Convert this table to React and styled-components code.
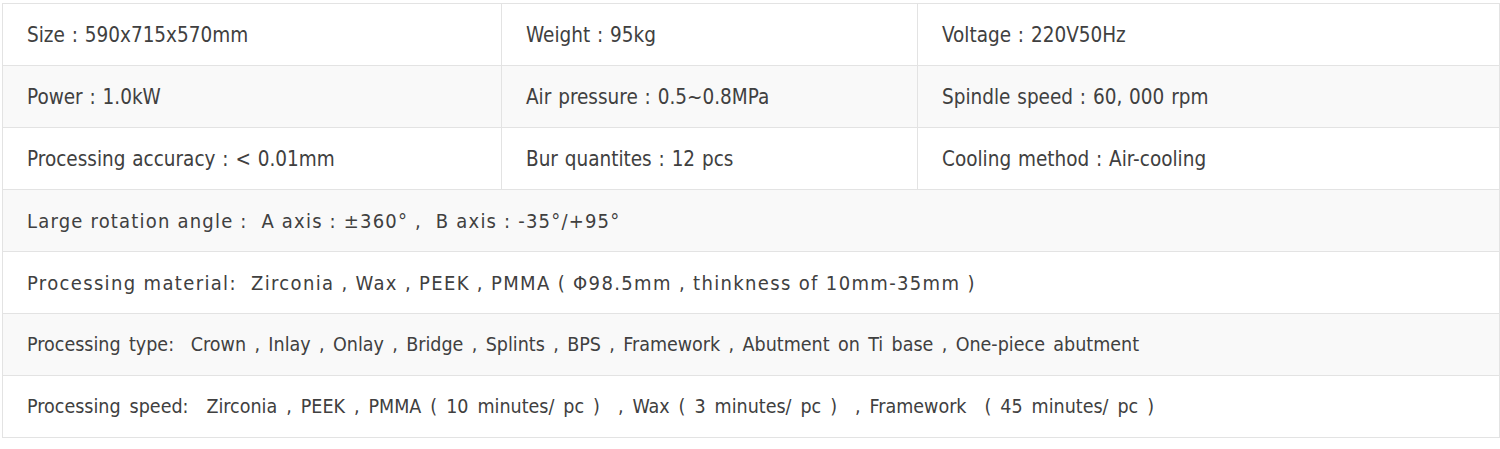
import React from "react";
import styled, { createGlobalStyle } from "styled-components";

const GlobalStyle = createGlobalStyle`
  html, body {
    margin: 0;
    padding: 0;
    background: #ffffff;
  }
`;

const Page = styled.div`
  padding: 3px 0 0 2px;
`;

const SpecTable = styled.table`
  width: 1498px;
  border-collapse: collapse;
  table-layout: fixed;
  border: 1px solid #e3e3e3;
  color: #404040;
`;

const Row = styled.tr`
  height: 62px;
  background: ${props => (props.$shade ? "#f9f9f9" : "#ffffff")};
  border-bottom: 1px solid #e3e3e3;
`;

const fonts = {
  plain: `
    font-size: 20.5px;
    letter-spacing: 0;
    word-spacing: 1px;
  `,
  spaced: `
    font-size: 20px;
    letter-spacing: 1.2px;
  `,
  narrow: `
    font-size: 19.5px;
    letter-spacing: 0;
    word-spacing: 3px;
  `,
};

const Cell = styled.td`
  padding: 0 0 0 24px;
  border-right: 1px solid #e3e3e3;
  vertical-align: middle;
  white-space: pre;
  font-family: "DejaVu Sans Condensed", "DejaVu Sans", sans-serif;
  ${props => fonts[props.$kind || "plain"]}
  ${props => props.$track && `letter-spacing: ${props.$track};`}
  ${props => props.$ws && `word-spacing: ${props.$ws};`}
`;

const triple = [
  ["Size : 590x715x570mm", "Weight : 95kg", "Voltage : 220V50Hz"],
  ["Power : 1.0kW", "Air pressure : 0.5~0.8MPa", "Spindle speed : 60, 000 rpm"],
  ["Processing accuracy : < 0.01mm", "Bur quantites : 12 pcs", "Cooling method : Air-cooling"],
];

const wide = [
  { text: "Large rotation angle :  A axis : ±360° ,  B axis : -35°/+95°", kind: "spaced" },
  {
    text: "Processing material:  Zirconia , Wax , PEEK , PMMA ( Φ98.5mm , thinkness of 10mm-35mm )",
    kind: "spaced",
    track: "1.35px",
  },
  {
    text: "Processing type:  Crown , Inlay , Onlay , Bridge , Splints , BPS , Framework , Abutment on Ti base , One-piece abutment",
    kind: "narrow",
    ws: "2.8px",
  },
  {
    text: "Processing speed:  Zirconia , PEEK , PMMA ( 10 minutes/ pc )  , Wax ( 3 minutes/ pc )  , Framework  ( 45 minutes/ pc )",
    kind: "narrow",
    ws: "3.4px",
  },
];

const App = () => {
  return (
    <Page>
      <GlobalStyle />
      <SpecTable>
        <colgroup>
          <col style={{ width: 499 }} />
          <col style={{ width: 416 }} />
          <col />
        </colgroup>
        <tbody>
          {triple.map((cells, i) => (
            <Row key={i} $shade={i % 2 === 1}>
              {cells.map(c => (
                <Cell key={c}>{c}</Cell>
              ))}
            </Row>
          ))}
          {wide.map((r, i) => (
            <Row key={r.text} $shade={i % 2 === 0}>
              <Cell colSpan={3} $kind={r.kind} $track={r.track} $ws={r.ws}>
                {r.text}
              </Cell>
            </Row>
          ))}
        </tbody>
      </SpecTable>
    </Page>
  );
};

export default App;
